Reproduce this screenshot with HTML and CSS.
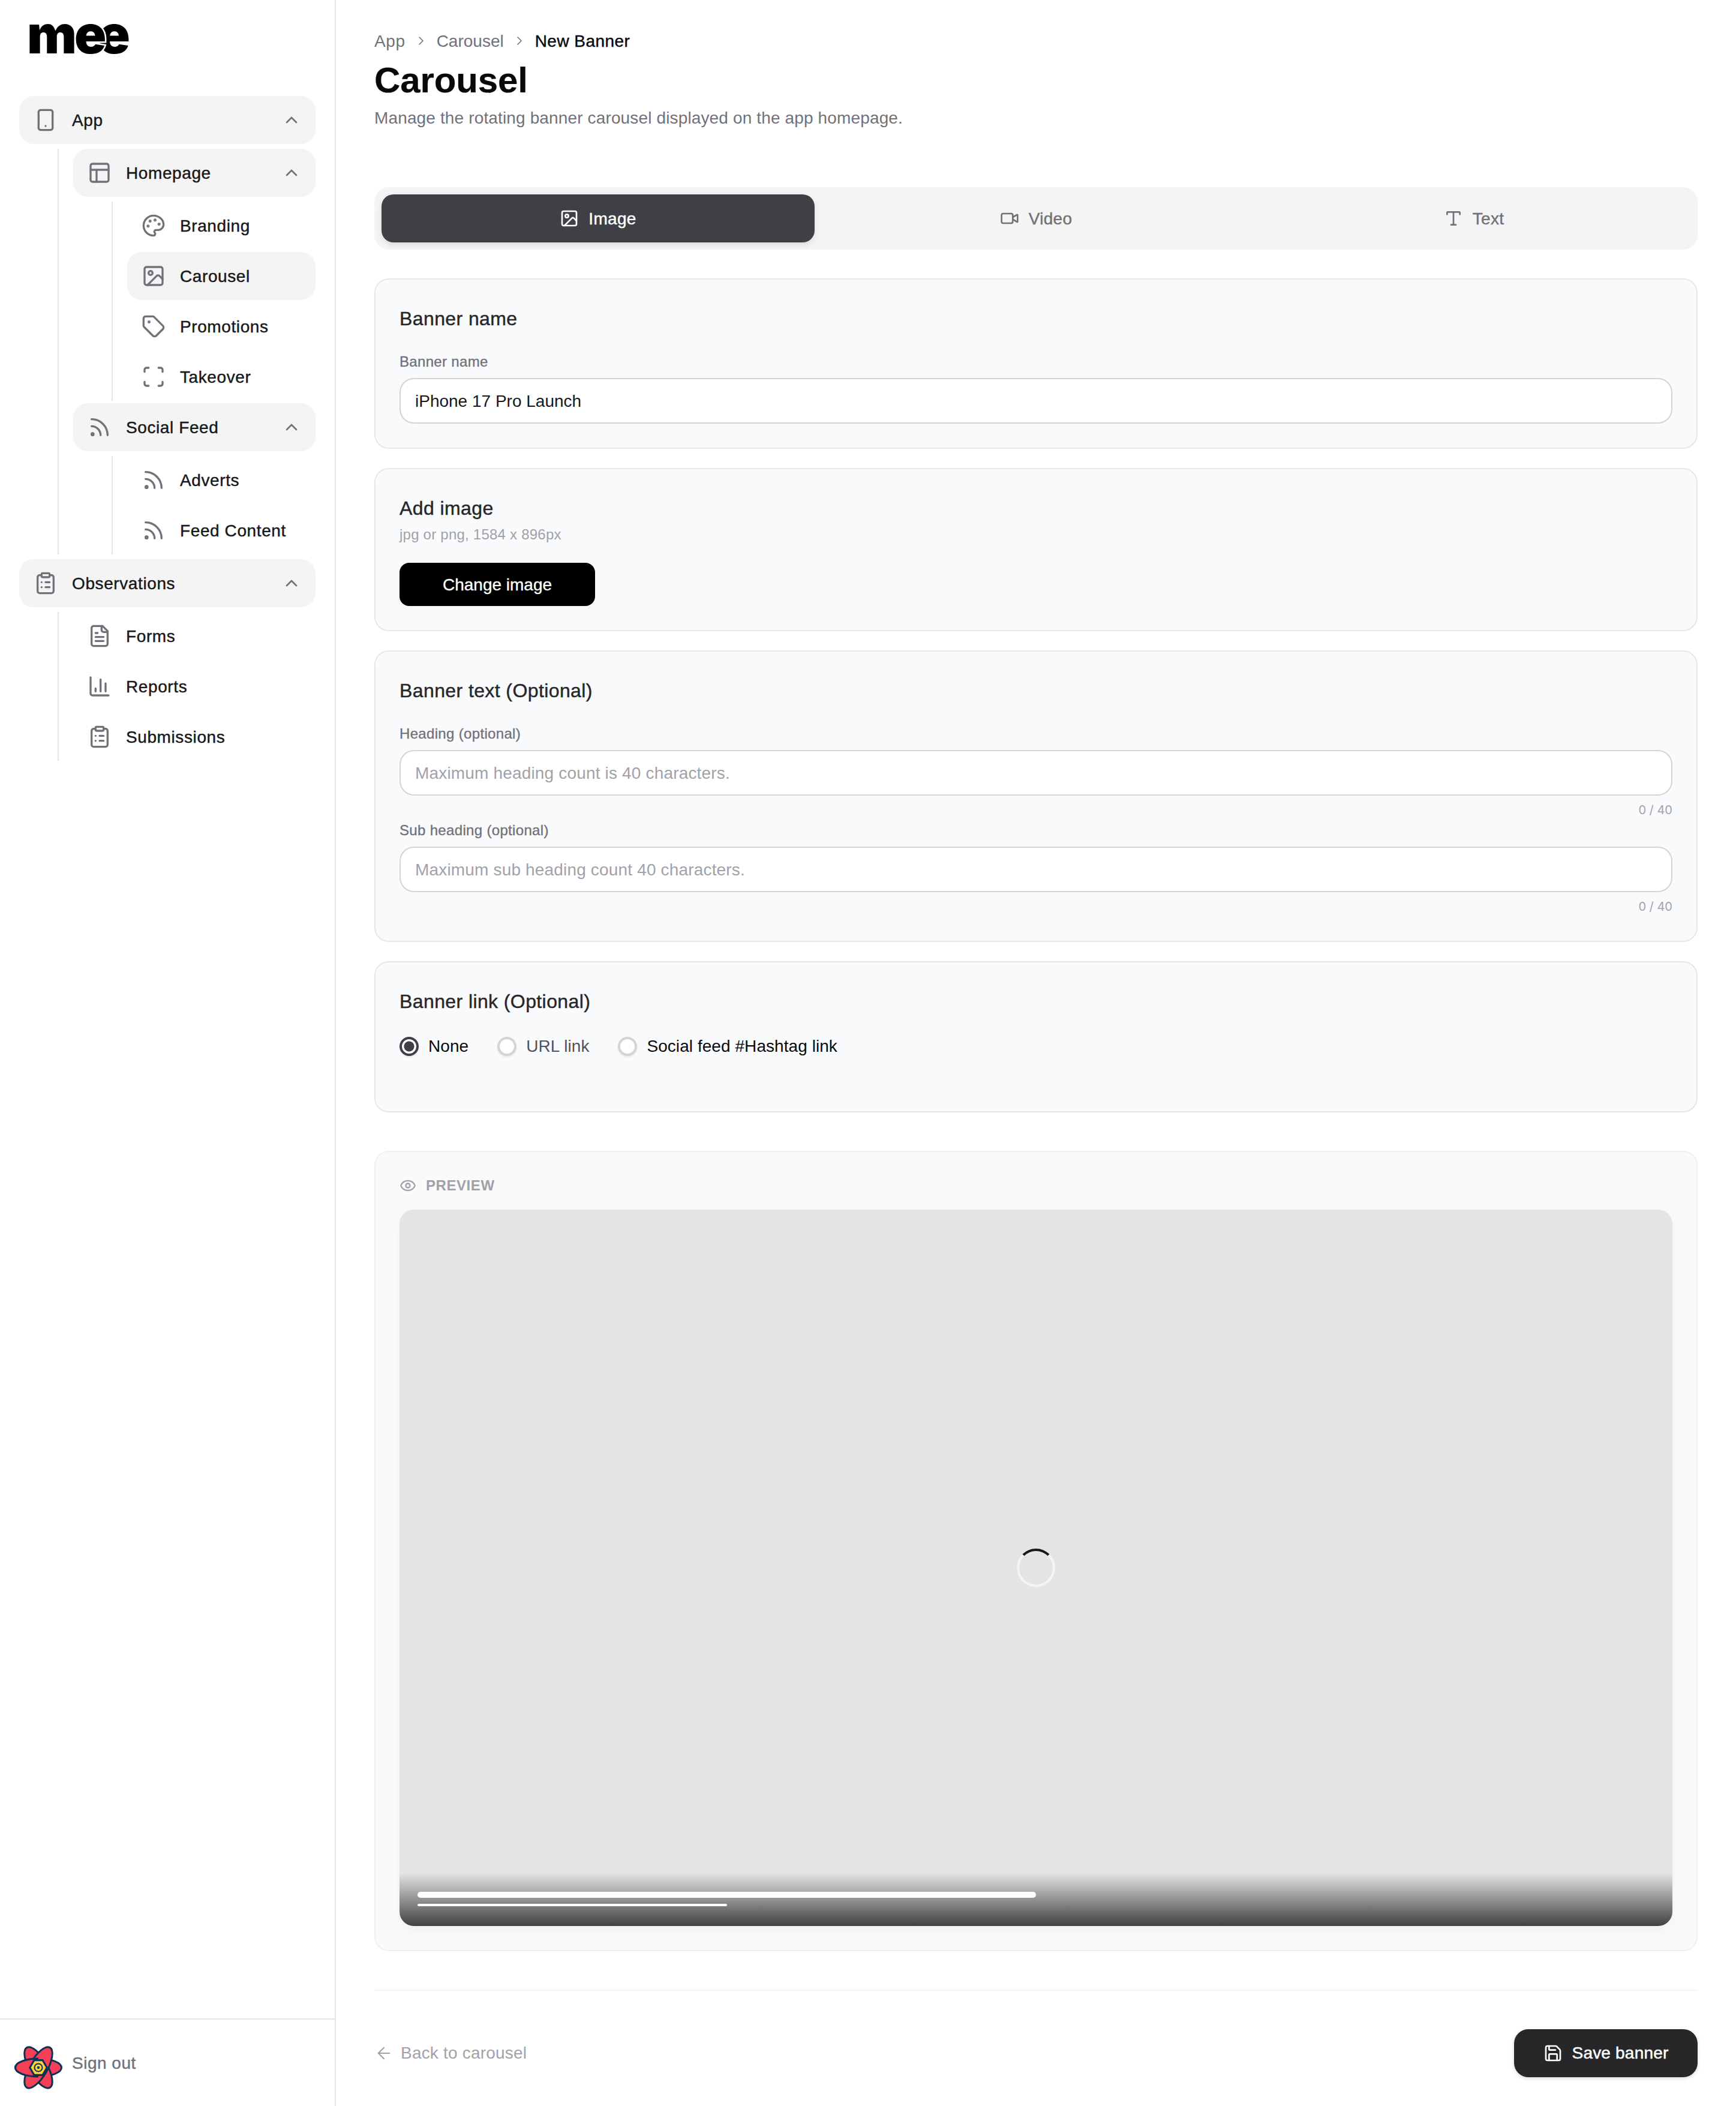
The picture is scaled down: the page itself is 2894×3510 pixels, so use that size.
FILE: index.html
```html
<!DOCTYPE html>
<html lang="en">
<head>
<meta charset="utf-8">
<title>Carousel</title>
<link rel="stylesheet" href="styles.css">
</head>
<body>
<svg class="sprite" aria-hidden="true">
  <symbol id="i-phone" viewBox="0 0 24 24"><rect x="5" y="2" width="14" height="20" rx="2"/><path d="M12 18h.01"/></symbol>
  <symbol id="i-layout" viewBox="0 0 24 24"><rect x="3" y="3" width="18" height="18" rx="2"/><path d="M3 9h18M9 21V9"/></symbol>
  <symbol id="i-palette" viewBox="0 0 24 24"><circle cx="13.5" cy="6.5" r=".5" fill="currentColor"/><circle cx="17.5" cy="10.5" r=".5" fill="currentColor"/><circle cx="8.5" cy="7.5" r=".5" fill="currentColor"/><circle cx="6.5" cy="12.5" r=".5" fill="currentColor"/><path d="M12 2C6.5 2 2 6.5 2 12s4.5 10 10 10c.926 0 1.648-.746 1.648-1.688 0-.437-.18-.835-.437-1.125-.29-.289-.438-.652-.438-1.125a1.64 1.64 0 0 1 1.668-1.668h1.996c3.051 0 5.555-2.503 5.555-5.554C21.965 6.012 17.461 2 12 2z"/></symbol>
  <symbol id="i-image" viewBox="0 0 24 24"><rect x="3" y="3" width="18" height="18" rx="2"/><circle cx="9" cy="9" r="2"/><path d="m21 15-3.086-3.086a2 2 0 0 0-2.828 0L6 21"/></symbol>
  <symbol id="i-tag" viewBox="0 0 24 24"><path d="M12.586 2.586A2 2 0 0 0 11.172 2H4a2 2 0 0 0-2 2v7.172a2 2 0 0 0 .586 1.414l8.704 8.704a2.426 2.426 0 0 0 3.42 0l6.58-6.58a2.426 2.426 0 0 0 0-3.42z"/><circle cx="7.5" cy="7.5" r=".5" fill="currentColor"/></symbol>
  <symbol id="i-scan" viewBox="0 0 24 24"><path d="M3 7V5a2 2 0 0 1 2-2h2M17 3h2a2 2 0 0 1 2 2v2M21 17v2a2 2 0 0 1-2 2h-2M7 21H5a2 2 0 0 1-2-2v-2"/></symbol>
  <symbol id="i-rss" viewBox="0 0 24 24"><path d="M4 11a9 9 0 0 1 9 9M4 4a16 16 0 0 1 16 16"/><circle cx="5" cy="19" r="1"/></symbol>
  <symbol id="i-clipboard" viewBox="0 0 24 24"><rect x="8" y="2" width="8" height="4" rx="1"/><path d="M16 4h2a2 2 0 0 1 2 2v14a2 2 0 0 1-2 2H6a2 2 0 0 1-2-2V6a2 2 0 0 1 2-2h2M12 11h4M12 16h4M8 11h.01M8 16h.01"/></symbol>
  <symbol id="i-file" viewBox="0 0 24 24"><path d="M15 2H6a2 2 0 0 0-2 2v16a2 2 0 0 0 2 2h12a2 2 0 0 0 2-2V7Z"/><path d="M14 2v4a2 2 0 0 0 2 2h4M10 9H8M16 13H8M16 17H8"/></symbol>
  <symbol id="i-chart" viewBox="0 0 24 24"><path d="M3 3v16a2 2 0 0 0 2 2h16M18 17V9M13 17V5M8 17v-3"/></symbol>
  <symbol id="i-up" viewBox="0 0 24 24"><path d="m18 15-6-6-6 6"/></symbol>
  <symbol id="i-right" viewBox="0 0 24 24"><path d="m9 18 6-6-6-6"/></symbol>
  <symbol id="i-video" viewBox="0 0 24 24"><path d="m16 13 5.223 3.482a.5.5 0 0 0 .777-.416V7.87a.5.5 0 0 0-.752-.432L16 10.5"/><rect x="2" y="6" width="14" height="12" rx="2"/></symbol>
  <symbol id="i-type" viewBox="0 0 24 24"><path d="M12 4v16M4 7V5a1 1 0 0 1 1-1h14a1 1 0 0 1 1 1v2M9 20h6"/></symbol>
  <symbol id="i-eye" viewBox="0 0 24 24"><path d="M2.062 12.348a1 1 0 0 1 0-.696 10.75 10.75 0 0 1 19.876 0 1 1 0 0 1 0 .696 10.75 10.75 0 0 1-19.876 0"/><circle cx="12" cy="12" r="3"/></symbol>
  <symbol id="i-save" viewBox="0 0 24 24"><path d="M15.2 3a2 2 0 0 1 1.4.6l3.8 3.8a2 2 0 0 1 .6 1.4V19a2 2 0 0 1-2 2H5a2 2 0 0 1-2-2V5a2 2 0 0 1 2-2z"/><path d="M17 21v-7a1 1 0 0 0-1-1H8a1 1 0 0 0-1 1v7M7 3v4a1 1 0 0 0 1 1h7"/></symbol>
  <symbol id="i-left" viewBox="0 0 24 24"><path d="m12 19-7-7 7-7M19 12H5"/></symbol>
</svg>

<div class="app">
  <aside class="sidebar">
    <div class="logo"><span class="logo-m">m</span><span class="logo-e1">e</span><span class="logo-e2">e</span></div>
    <nav class="nav">
      <div class="group">
        <a class="row open"><svg class="ico"><use href="#i-phone"/></svg><span class="row-label">App</span><svg class="chev"><use href="#i-up"/></svg></a>
        <div class="branch">
          <div class="group">
            <a class="row open"><svg class="ico"><use href="#i-layout"/></svg><span class="row-label">Homepage</span><svg class="chev"><use href="#i-up"/></svg></a>
            <div class="branch">
              <a class="row"><svg class="ico"><use href="#i-palette"/></svg><span class="row-label">Branding</span></a>
              <a class="row open"><svg class="ico"><use href="#i-image"/></svg><span class="row-label">Carousel</span></a>
              <a class="row"><svg class="ico"><use href="#i-tag"/></svg><span class="row-label">Promotions</span></a>
              <a class="row"><svg class="ico"><use href="#i-scan"/></svg><span class="row-label">Takeover</span></a>
            </div>
          </div>
          <div class="group">
            <a class="row open"><svg class="ico"><use href="#i-rss"/></svg><span class="row-label">Social Feed</span><svg class="chev"><use href="#i-up"/></svg></a>
            <div class="branch">
              <a class="row"><svg class="ico"><use href="#i-rss"/></svg><span class="row-label">Adverts</span></a>
              <a class="row"><svg class="ico"><use href="#i-rss"/></svg><span class="row-label">Feed Content</span></a>
            </div>
          </div>
        </div>
      </div>
      <div class="group">
        <a class="row open"><svg class="ico"><use href="#i-clipboard"/></svg><span class="row-label">Observations</span><svg class="chev"><use href="#i-up"/></svg></a>
        <div class="branch">
          <a class="row"><svg class="ico"><use href="#i-file"/></svg><span class="row-label">Forms</span></a>
          <a class="row"><svg class="ico"><use href="#i-chart"/></svg><span class="row-label">Reports</span></a>
          <a class="row"><svg class="ico"><use href="#i-clipboard"/></svg><span class="row-label">Submissions</span></a>
        </div>
      </div>
    </nav>
    <div class="side-foot">
      <svg class="mark" viewBox="0 0 80 80">
        <defs>
          <clipPath id="mark-clip"><rect x="0" y="0" width="40" height="80"/></clipPath>
        </defs>
        <g class="mark-petal">
          <ellipse cx="40" cy="40" rx="38.5" ry="15"/>
          <ellipse cx="40" cy="40" rx="38.5" ry="15" transform="rotate(60 40 40)"/>
          <ellipse cx="40" cy="40" rx="38.5" ry="15" transform="rotate(120 40 40)"/>
          <g clip-path="url(#mark-clip)"><ellipse cx="40" cy="40" rx="38.5" ry="15"/></g>
        </g>
        <path class="mark-hex-back" d="M24 40 32 26H48L56 40 48 54H32Z"/>
        <path class="mark-hex" d="M27.5 40 33.8 29.3H46.2L52.5 40 46.2 50.7H33.8Z"/>
        <circle class="mark-ring" cx="40" cy="40" r="6.5"/>
        <circle class="mark-dot" cx="40" cy="40" r="2.2"/>
      </svg>
      <span class="sign-out">Sign out</span>
    </div>
  </aside>

  <main class="main">
    <div class="crumbs">
      <span class="crumb crumb-root">App</span><svg class="crumb-sep"><use href="#i-right"/></svg>
      <span class="crumb">Carousel</span><svg class="crumb-sep"><use href="#i-right"/></svg>
      <span class="crumb crumb-current">New Banner</span>
    </div>
    <h1 class="title">Carousel</h1>
    <p class="subtitle">Manage the rotating banner carousel displayed on the app homepage.</p>

    <div class="tabs">
      <div class="tab active"><svg class="tab-ico"><use href="#i-image"/></svg><span class="tab-label">Image</span></div>
      <div class="tab"><svg class="tab-ico"><use href="#i-video"/></svg><span class="tab-label">Video</span></div>
      <div class="tab"><svg class="tab-ico"><use href="#i-type"/></svg><span class="tab-label">Text</span></div>
    </div>

    <div class="cards">
      <section class="card">
        <h2 class="card-title">Banner name</h2>
        <label class="label label-first">Banner name</label>
        <input class="input" type="text" value="iPhone 17 Pro Launch">
      </section>

      <section class="card">
        <h2 class="card-title">Add image</h2>
        <p class="hint">jpg or png, 1584 x 896px</p>
        <button class="btn-change" type="button">Change image</button>
      </section>

      <section class="card">
        <h2 class="card-title">Banner text (Optional)</h2>
        <label class="label label-first">Heading (optional)</label>
        <input class="input" type="text" placeholder="Maximum heading count is 40 characters.">
        <div class="count">0 / 40</div>
        <label class="label">Sub heading (optional)</label>
        <input class="input" type="text" placeholder="Maximum sub heading count 40 characters.">
        <div class="count">0 / 40</div>
      </section>

      <section class="card card-link">
        <h2 class="card-title">Banner link (Optional)</h2>
        <div class="radios">
          <label class="radio"><input type="radio" name="link" checked><span>None</span></label>
          <label class="radio muted"><input type="radio" name="link"><span>URL link</span></label>
          <label class="radio"><input type="radio" name="link"><span>Social feed #Hashtag link</span></label>
        </div>
      </section>
    </div>

    <section class="card preview-card">
      <div class="preview-head"><svg class="eye"><use href="#i-eye"/></svg>PREVIEW</div>
      <div class="preview">
        <div class="spinner"></div>
        <div class="shade">
          <div class="bar bar-a"></div>
          <div class="bar bar-b"></div>
        </div>
      </div>
    </section>

    <footer class="foot">
      <a class="back"><svg class="back-ico"><use href="#i-left"/></svg>Back to carousel</a>
      <button class="btn-save" type="button"><svg class="save-ico"><use href="#i-save"/></svg>Save banner</button>
    </footer>
  </main>
</div>
</body>
</html>
```

FILE: styles.css
```css
* { box-sizing: border-box; }
html, body { margin: 0; padding: 0; background: #fff; }
body {
  font-family: "Liberation Sans", Arial, sans-serif;
  font-size: 28px;
  line-height: 40px;
  color: #18181b;
}
.sprite { display: none; }
svg { fill: none; stroke: currentColor; stroke-width: 2; stroke-linecap: round; stroke-linejoin: round; flex: none; }

.app { display: flex; min-height: 100vh; }

/* Sidebar */
.sidebar {
  width: 560px;
  flex: none;
  display: flex;
  flex-direction: column;
  border-right: 2px solid #e4e4e7;
}
.logo {
  height: 160px;
  padding: 13px 0 0 45px;
  font-family: Inter, "Liberation Sans", sans-serif;
  font-size: 88px;
  font-weight: 900;
  line-height: 88px;
  color: #000;
}
.logo-m { letter-spacing: -4px; }
.logo-e1 {
  position: relative;
  z-index: 1;
  letter-spacing: -14px;
  -webkit-text-stroke: 5px #fff;
  paint-order: stroke fill;
}
.nav { flex: 1; padding: 0 32px; display: flex; flex-direction: column; gap: 8px; }
.group { display: flex; flex-direction: column; gap: 8px; }
.branch {
  margin-left: 64px;
  border-left: 2px solid #e4e4e7;
  padding-left: 24px;
  display: flex;
  flex-direction: column;
  gap: 4px;
}
.row {
  height: 80px;
  display: flex;
  align-items: center;
  gap: 24px;
  padding: 0 24px;
  border-radius: 24px;
}
.row.open { background: #f4f4f5; }
.ico { width: 40px; height: 40px; color: #71717a; }
.row-label { flex: 1; padding-top: 2px; letter-spacing: .6px; -webkit-text-stroke: .45px currentColor; }
.chev { width: 32px; height: 32px; color: #71717a; }

.side-foot {
  height: 146px;
  border-top: 2px solid #e4e4e7;
  display: flex;
  align-items: flex-start;
  gap: 16px;
  padding: 40px 0 0 24px;
}
.mark { width: 80px; height: 80px; stroke: none; }
.mark-petal ellipse { fill: #f43f56; stroke: #0b3154; stroke-width: 3; }
.mark-hex-back { fill: #0b3154; stroke: none; }
.mark-hex { fill: #fbd13e; stroke: none; }
.mark-ring { fill: none; stroke: #0b3154; stroke-width: 2; }
.mark-dot { fill: #0b3154; stroke: none; }
.sign-out { color: #71717a; margin-top: 13px; letter-spacing: .5px; -webkit-text-stroke: .45px currentColor; }

/* Main */
.main { flex: 1; min-width: 0; padding: 48px 64px 48px 64px; }
.crumbs { display: flex; align-items: center; gap: 14px; color: #71717a; height: 40px; }
.crumb { padding-top: 2px; }
.crumb-root { letter-spacing: .6px; }
.crumb-sep { width: 24px; height: 24px; color: #71717a; stroke-width: 1.6; }
.crumb-current { color: #09090b; letter-spacing: .45px; -webkit-text-stroke: .45px currentColor; }
.title { margin: 10px 0 0; font-size: 60px; line-height: 72px; font-weight: 700; color: #09090b; letter-spacing: -.12px; -webkit-text-stroke: .2px currentColor; }
.subtitle { margin: 7px 0 0; color: #71717a; letter-spacing: .14px; }

.tabs {
  margin-top: 95px;
  background: #f4f4f5;
  border-radius: 24px;
  padding: 12px;
  display: grid;
  grid-template-columns: repeat(3, 1fr);
  gap: 8px;
}
.tab {
  height: 80px;
  border-radius: 20px;
  display: flex;
  align-items: center;
  justify-content: center;
  gap: 16px;
  color: #71717a;
}
.tab-label { padding-top: 2px; letter-spacing: .3px; -webkit-text-stroke: .45px currentColor; }
.tab.active { background: #3f3f46; color: #fff; box-shadow: 0 4px 10px rgba(0,0,0,.1); }
.tab-ico { width: 32px; height: 32px; }

.cards { margin-top: 48px; display: flex; flex-direction: column; gap: 32px; }
.card {
  background: #f9fafb;
  border: 2px solid #e5e7eb;
  border-radius: 24px;
  padding: 40px;
}
.card-title {
  margin: 0;
  height: 48px;
  font-size: 32px;
  line-height: 50px;
  font-weight: 400;
  color: #27272a;
  letter-spacing: .4px;
  -webkit-text-stroke: .45px currentColor;
}
.label {
  display: block;
  height: 32px;
  font-size: 24px;
  line-height: 34px;
  color: #71717a;
  margin-bottom: 12px;
  letter-spacing: .33px;
  -webkit-text-stroke: .35px currentColor;
}
.label-first { margin-top: 32px; }
.input {
  display: block;
  width: 100%;
  height: 76px;
  border: 2px solid #d4d4d8;
  border-radius: 24px;
  background: #fff;
  padding: 2px 24px 0;
  font: inherit;
  color: #18181b;
  outline: none;
}
.input::placeholder { color: #a1a1aa; opacity: 1; letter-spacing: .17px; }
.count {
  margin-top: 8px;
  text-align: right;
  font-family: Inter, "Liberation Sans", sans-serif;
  font-size: 20px;
  line-height: 33px;
  color: #a1a1aa;
}
.hint { margin: 4px 0 32px; height: 32px; font-size: 24px; line-height: 34px; color: #a1a1aa; letter-spacing: .23px; }
.btn-change {
  display: block;
  width: 326px;
  height: 72px;
  border: 0;
  border-radius: 16px;
  background: #000;
  color: #fff;
  font: inherit;
  padding: 2px 0 0;
  -webkit-text-stroke: .35px currentColor;
}

.radios { height: 40px; margin: 32px 0 48px; display: flex; gap: 48px; letter-spacing: .06px; }
.radio { display: flex; align-items: center; gap: 16px; color: #09090b; }
.radio.muted { color: #52525b; }
.radio input {
  appearance: none;
  -webkit-appearance: none;
  margin: 0;
  width: 32px;
  height: 32px;
  border-radius: 50%;
  border: 4px solid #d4d4d8;
  background: #fff;
  box-shadow: 0 2px 3px rgba(0,0,0,.08);
}
.radio input:checked { border-color: #3f3f46; background: radial-gradient(circle, #3f3f46 0 8px, #fff 9px); }

.preview-card { margin-top: 64px; background: #fafafa; border-color: #f0f0f1; }
.preview-head {
  height: 32px;
  margin-bottom: 24px;
  display: flex;
  align-items: center;
  gap: 16px;
  font-size: 24px;
  font-weight: 700;
  letter-spacing: .56px;
  color: #a1a1aa;
}
.eye { width: 28px; height: 28px; }
.preview {
  position: relative;
  aspect-ratio: 16 / 9;
  border-radius: 24px;
  background: #e4e4e7;
  overflow: hidden;
  display: flex;
  align-items: center;
  justify-content: center;
  box-shadow: 0 8px 20px rgba(0,0,0,.04);
}
.spinner { width: 64px; height: 64px; border-radius: 50%; border: 4px solid #f4f4f5; border-top-color: #18181b; }
.shade {
  position: absolute;
  left: 0;
  right: 0;
  bottom: 0;
  height: 88px;
  padding: 31px 30px 0;
  display: flex;
  flex-direction: column;
  gap: 10px;
  background: linear-gradient(to bottom, rgba(0,0,0,0), rgba(0,0,0,.72));
}
.bar { background: #fff; border-radius: 6px; }
.bar-a { width: 50%; height: 10px; }
.bar-b { width: 25%; height: 4px; }

.foot {
  margin-top: 64px;
  border-top: 2px solid #f4f4f5;
  padding-top: 64px;
  display: flex;
  align-items: center;
  justify-content: space-between;
}
.back { display: flex; align-items: center; gap: 12px; color: #a1a1aa; letter-spacing: .2px; }
.back-ico { width: 32px; height: 32px; stroke-width: 1.6; }
.btn-save {
  width: 306px;
  height: 80px;
  border: 0;
  border-radius: 24px;
  background: #27272a;
  color: #fff;
  font: inherit;
  letter-spacing: .2px;
  display: flex;
  align-items: center;
  justify-content: center;
  gap: 16px;
  box-shadow: 0 2px 6px rgba(0,0,0,.15);
  -webkit-text-stroke: .5px currentColor;
}
.save-ico { width: 32px; height: 32px; }
```
